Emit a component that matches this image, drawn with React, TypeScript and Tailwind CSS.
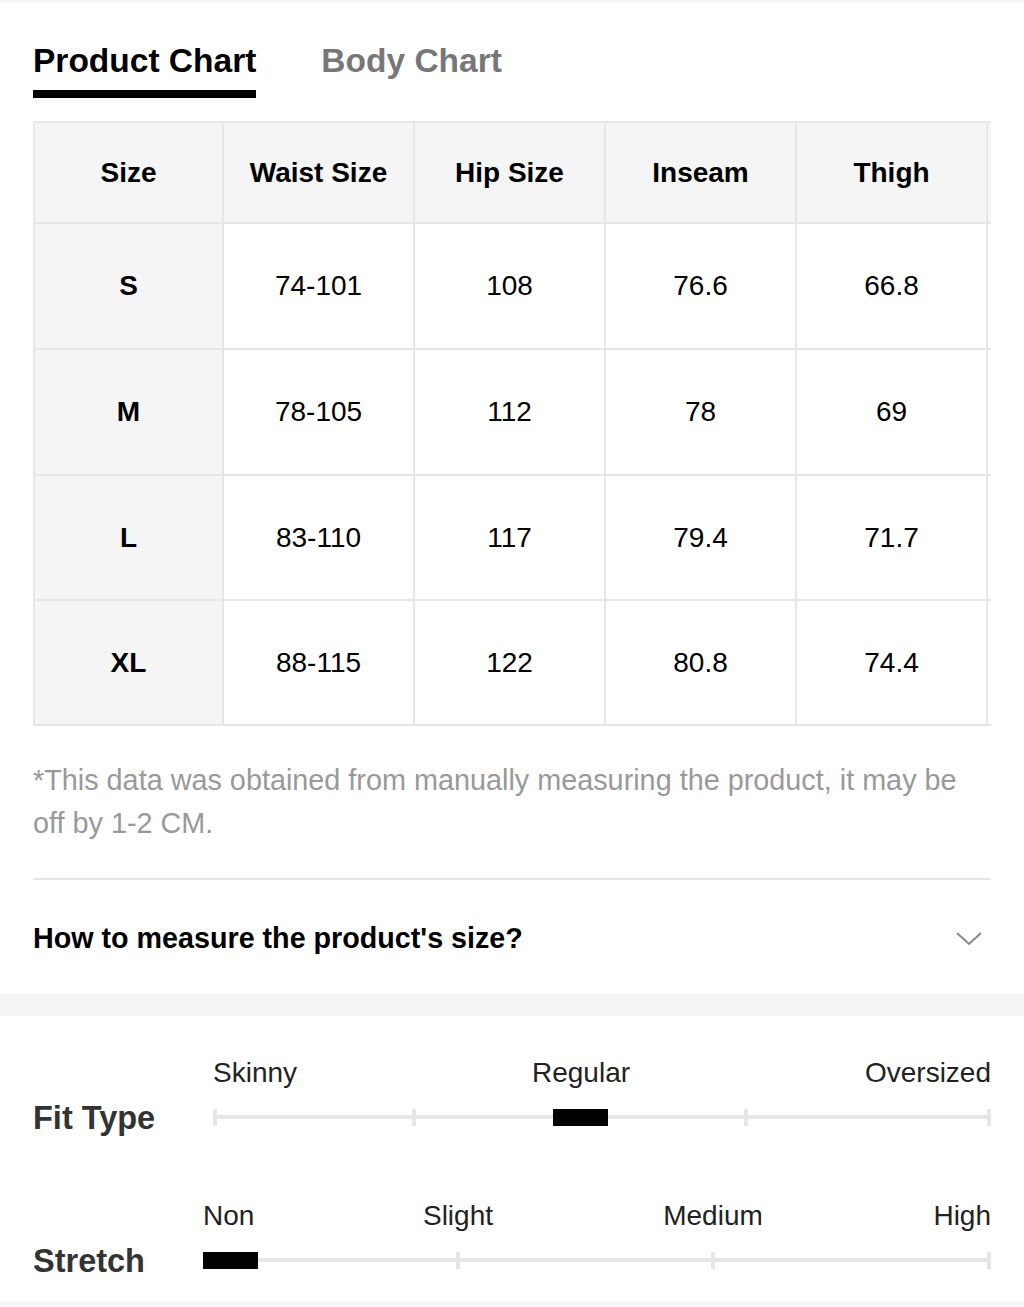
const columns = ["Size", "Waist Size", "Hip Size", "Inseam", "Thigh", ""];

const rows = [
  { size: "S", values: ["74-101", "108", "76.6", "66.8", ""], h: "h-[126px]" },
  { size: "M", values: ["78-105", "112", "78", "69", ""], h: "h-[126px]" },
  { size: "L", values: ["83-110", "117", "79.4", "71.7", ""], h: "h-[125px]" },
  { size: "XL", values: ["88-115", "122", "80.8", "74.4", ""], h: "h-[125px]" },
];

function Track({ ticks, thumb }: { ticks: number[]; thumb: number }) {
  return (
    <div className="relative h-[17px]">
      <div className="absolute left-0 right-0 top-[6px] h-[4px] bg-[#e6e6e6]" />
      {ticks.map((t) => (
        <div
          key={t}
          className="absolute top-0 h-[17px] w-[4px] bg-[#e6e6e6]"
          style={{ left: t }}
        />
      ))}
      <div className="absolute right-0 top-0 h-[17px] w-[4px] bg-[#e6e6e6]" />
      <div className="absolute top-0 h-[17px] w-[55px] bg-black" style={{ left: thumb }} />
    </div>
  );
}

export default function App() {
  return (
    <main
      className="min-h-[1307px] w-[1024px] border-t-2 border-[#f5f5f5] bg-white text-black"
      style={{ fontFamily: '"Liberation Sans", Arial, sans-serif' }}
    >
      <div className="px-[33px]">
        {/* tabs */}
        <div className="flex gap-[65px] pt-[39px]">
          <div className="flex flex-col">
            <span className="text-[33.5px] font-bold leading-[40px]">Product Chart</span>
            <span className="mt-[9px] h-[8px] w-full bg-black" />
          </div>
          <span className="text-[33.5px] font-bold leading-[40px] text-[#777]">Body Chart</span>
        </div>

        {/* size table */}
        <div className="mt-[23px] w-[958px] overflow-hidden">
          <div className="w-[1150px] text-[28px]">
            <div className="flex h-[103px] border-y-2 border-[#e6e6e6] bg-[#f5f5f5] font-bold">
              {columns.map((c, i) => (
                <div
                  key={i}
                  className={`flex w-[191px] shrink-0 items-center justify-center border-r-2 border-[#e6e6e6] ${
                    i === 0 ? "border-l-2" : ""
                  }`}
                >
                  {c}
                </div>
              ))}
            </div>
            {rows.map((r) => (
              <div key={r.size} className={`flex border-b-2 border-[#e6e6e6] ${r.h}`}>
                <div className="flex w-[191px] shrink-0 items-center justify-center border-x-2 border-[#e6e6e6] bg-[#f5f5f5] font-bold">
                  {r.size}
                </div>
                {r.values.map((v, i) => (
                  <div
                    key={i}
                    className="flex w-[191px] shrink-0 items-center justify-center border-r-2 border-[#e6e6e6]"
                  >
                    {v}
                  </div>
                ))}
              </div>
            ))}
          </div>
        </div>

        <p className="mt-[33px] max-w-[935px] text-[28.8px] leading-[43px] text-[#999]">
          *This data was obtained from manually measuring the product, it may be off by 1-2 CM.
        </p>

        <div className="mt-[33px] h-[2px] bg-[#e6e6e6]" />

        <div className="flex h-[114px] items-center justify-between">
          <span className="pt-[3px] text-[28.7px] font-bold">How to measure the product's size?</span>
          <svg width="28" height="16" viewBox="0 0 28 16" className="mr-[8px] mt-[3px]" fill="none">
            <path d="M2 2 L14 13 L26 2" stroke="#888" strokeWidth="2" />
          </svg>
        </div>
      </div>

      <div className="h-[22px] bg-[#f5f5f5]" />

      <div className="px-[33px] pt-[39px]">
        {/* fit type */}
        <div className="flex items-end">
          <span className="mb-[-12px] w-[180px] text-[32.5px] font-bold leading-[40px] text-[#333]">
            Fit Type
          </span>
          <div className="flex-1">
            <div className="flex h-[36px] items-center justify-between text-[28px] text-[#222]">
              <span className="w-[120px]">Skinny</span>
              <span className="ml-[-32px]">Regular</span>
              <span className="w-[130px] text-right">Oversized</span>
            </div>
            <div className="mt-[18px]">
              <Track ticks={[0, 199, 531]} thumb={340} />
            </div>
          </div>
        </div>

        {/* stretch */}
        <div className="mt-[69px] flex items-end">
          <span className="mb-[-12px] w-[170px] text-[32.5px] font-bold leading-[40px] text-[#333]">
            Stretch
          </span>
          <div className="flex-1">
            <div className="relative h-[36px] text-[28px] text-[#222]">
              <span className="absolute left-0">Non</span>
              <span className="absolute left-[255px] -translate-x-1/2">Slight</span>
              <span className="absolute left-[510px] -translate-x-1/2">Medium</span>
              <span className="absolute right-0">High</span>
            </div>
            <div className="mt-[21px]">
              <Track ticks={[253, 508]} thumb={0} />
            </div>
          </div>
        </div>
      </div>

      <div className="mt-[33px] h-[4px] bg-[#f5f5f5]" />
    </main>
  );
}
